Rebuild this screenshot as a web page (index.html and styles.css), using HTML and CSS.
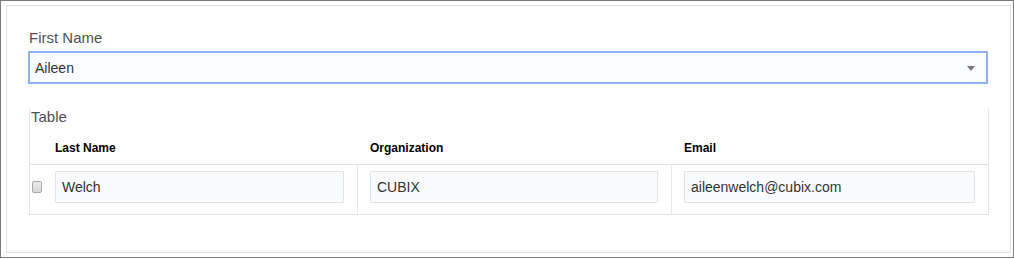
FILE: index.html
```html
<!DOCTYPE html>
<html lang="en">
<head>
  <meta charset="UTF-8" />
  <title>First Name</title>
  <link rel="stylesheet" href="styles.css">
</head>
<body>
  <div class="frame">
    <div class="panel">
      <label class="field-label">First Name</label>
      <div class="select">
        <span class="select-value">Aileen</span>
        <span class="caret"></span>
      </div>

      <div class="table-box">
        <div class="caption">Table</div>
        <div class="row head">
          <div class="cell check"></div>
          <div class="cell">Last Name</div>
          <div class="cell">Organization</div>
          <div class="cell">Email</div>
        </div>
        <div class="row body">
          <div class="cell check"><input type="checkbox" class="checkbox"></div>
          <div class="cell"><input class="text-input" type="text" value="Welch"></div>
          <div class="cell divided"><input class="text-input" type="text" value="CUBIX"></div>
          <div class="cell divided"><input class="text-input" type="text" value="aileenwelch@cubix.com"></div>
        </div>
      </div>
    </div>
  </div>
</body>
</html>
```

FILE: styles.css
```css
* {
  margin: 0;
  padding: 0;
  box-sizing: border-box;
}

body {
  font-family: "Liberation Sans", Arial, sans-serif;
  background: #ffffff;
  color: #333333;
}

.frame {
  width: 1014px;
  height: 258px;
  border: 1px solid #7b7b7b;
  padding: 4px 2px 4px 5px;
}

.panel {
  height: 248px;
  border: 1px solid #dce2e9;
  padding: 23px 21px 0 21px;
}

.field-label {
  display: block;
  font-size: 15px;
  line-height: 17px;
  color: #505050;
  padding-left: 1px;
  margin-bottom: 5px;
}

.select {
  width: 960px;
  height: 33px;
  border: 2px solid #8db3f5;
  background: #fafcfe;
  display: flex;
  align-items: center;
  justify-content: space-between;
  padding: 0 11px 0 5px;
  font-size: 14px;
  color: #333333;
}

.caret {
  width: 0;
  height: 0;
  border-left: 4px solid transparent;
  border-right: 4px solid transparent;
  border-top: 5px solid #777777;
  margin-top: 1px;
}

.table-box {
  width: 960px;
  margin: 24px 0 0 1px;
  border-left: 1px solid #e3e7ec;
  border-right: 1px solid #e3e7ec;
  border-bottom: 1px solid #dfe3e8;
}

.caption {
  font-size: 15px;
  line-height: 17px;
  color: #505050;
  padding-left: 1px;
}

.row {
  display: grid;
  grid-template-columns: 12px 315px 314px 1fr;
}

.cell {
  border-left: 1px solid transparent;
  padding: 0 13px 0 12px;
}

.cell.check {
  border-left: none;
  padding: 0;
}

.head {
  padding: 16px 0 9px;
  font-size: 12px;
  line-height: 14px;
  font-weight: bold;
  color: #000000;
  border-bottom: 1px solid #e1e5ea;
}

.body .cell {
  display: flex;
  align-items: center;
  padding-top: 6px;
  padding-bottom: 11px;
}

.body .cell.check {
  padding-top: 6px;
  padding-bottom: 11px;
}

.body .cell.divided {
  border-left: 1px solid #e6e9ed;
}

.checkbox {
  appearance: none;
  width: 12px;
  height: 12px;
  margin-left: 2px;
  border: 1px solid #a8a8a8;
  border-radius: 2px;
  background: linear-gradient(to bottom, #ececec, #d6d6d6);
}

.text-input {
  width: 100%;
  height: 32px;
  border: 1px solid #e2e6ea;
  border-radius: 1px;
  background: #f9fbfd;
  padding: 0 6px;
  font-family: "Liberation Sans", Arial, sans-serif;
  font-size: 14px;
  color: #333333;
  outline: none;
}
```
